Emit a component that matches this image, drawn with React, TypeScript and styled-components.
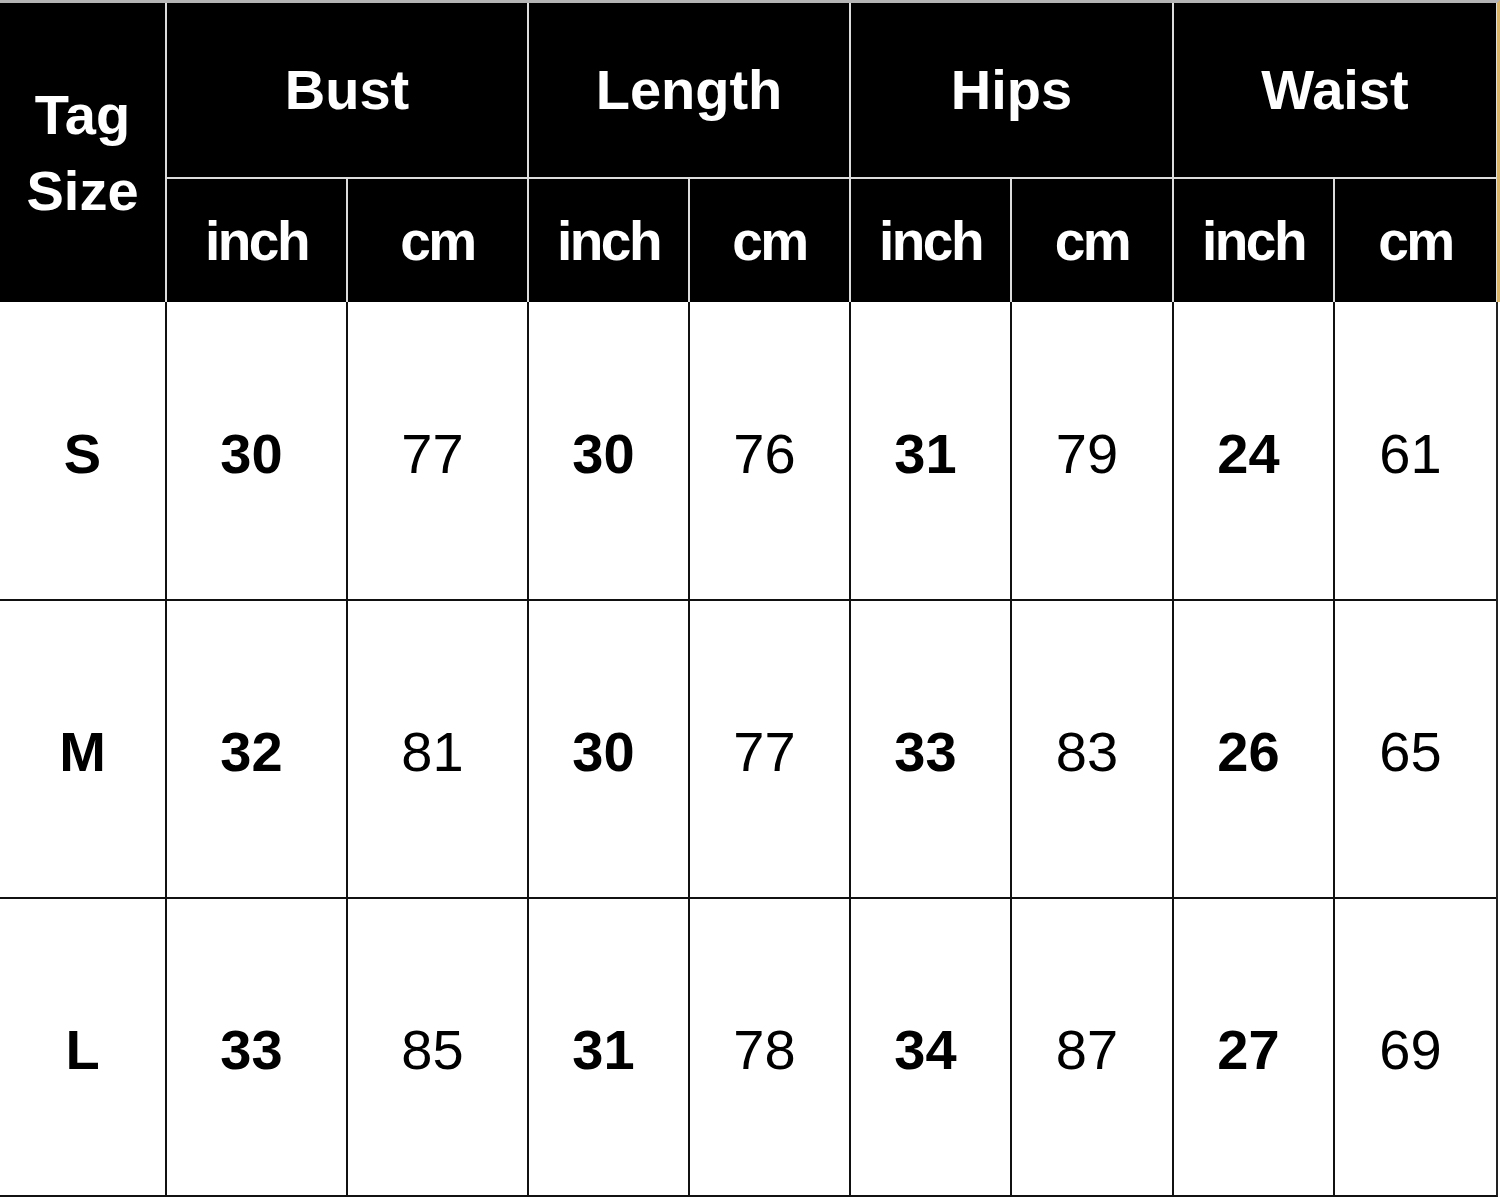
import React from "react";
import styled, { createGlobalStyle } from "styled-components";

const GlobalStyle = createGlobalStyle`
  html, body {
    margin: 0;
    padding: 0;
    background: #ffffff;
  }
  body {
    font-family: "Liberation Sans", Arial, sans-serif;
  }
`;

const COLUMNS = "165px 179px 179px 159px 159px 159px 160px 159px 161px";

const Chart = styled.div`
  width: 1500px;
  height: 1202px;
  background: #ffffff;
  overflow: hidden;
`;

const Head = styled.div`
  display: grid;
  grid-template-columns: ${COLUMNS};
  grid-template-rows: 174px 123px;
  column-gap: 2px;
  row-gap: 2px;
  width: 1497px;
  background: #dcdcdc;
  border-top: 3px solid #b4b4b4;
  border-right: 3px solid #d8b46a;
`;

const HeadCell = styled.div<{ $span?: number; $rows?: number; $unit?: boolean }>`
  display: flex;
  align-items: center;
  justify-content: center;
  text-align: center;
  background: #000000;
  color: #ffffff;
  font-weight: 700;
  font-size: ${(p) => (p.$unit ? "55px" : "56px")};
  letter-spacing: ${(p) => (p.$unit ? "-2.5px" : "0")};
  line-height: 76px;
  grid-column: span ${(p) => p.$span ?? 1};
  grid-row: span ${(p) => p.$rows ?? 1};
`;

const Body = styled.div`
  display: grid;
  grid-template-columns: ${COLUMNS};
  grid-template-rows: 297px 296px 296px;
  column-gap: 2px;
  row-gap: 2px;
  width: 1496px;
  background: #111111;
  border-right: 2px solid #222222;
  border-bottom: 2px solid #111111;
`;

const Cell = styled.div<{ $bold?: boolean; $size?: boolean }>`
  display: flex;
  align-items: center;
  justify-content: center;
  background: #ffffff;
  color: #000000;
  font-size: 56px;
  line-height: 1;
  font-weight: ${(p) => (p.$bold ? 700 : 400)};
  padding-right: ${(p) => (p.$size ? "0" : "10px")};
  padding-top: 6px;
`;

const measures = ["Bust", "Length", "Hips", "Waist"];

const rows: { size: string; values: number[] }[] = [
  { size: "S", values: [30, 77, 30, 76, 31, 79, 24, 61] },
  { size: "M", values: [32, 81, 30, 77, 33, 83, 26, 65] },
  { size: "L", values: [33, 85, 31, 78, 34, 87, 27, 69] },
];

export default function App() {
  return (
    <>
      <GlobalStyle />
      <Chart>
        <Head>
          <HeadCell $rows={2}>
            Tag
            <br />
            Size
          </HeadCell>
          {measures.map((m) => (
            <HeadCell key={m} $span={2}>
              {m}
            </HeadCell>
          ))}
          {measures.map((m) => (
            <React.Fragment key={m}>
              <HeadCell $unit>inch</HeadCell>
              <HeadCell $unit>cm</HeadCell>
            </React.Fragment>
          ))}
        </Head>
        <Body>
          {rows.map((r) => (
            <React.Fragment key={r.size}>
              <Cell $bold $size>
                {r.size}
              </Cell>
              {r.values.map((v, i) => (
                <Cell key={i} $bold={i % 2 === 0}>
                  {v}
                </Cell>
              ))}
            </React.Fragment>
          ))}
        </Body>
      </Chart>
    </>
  );
}
